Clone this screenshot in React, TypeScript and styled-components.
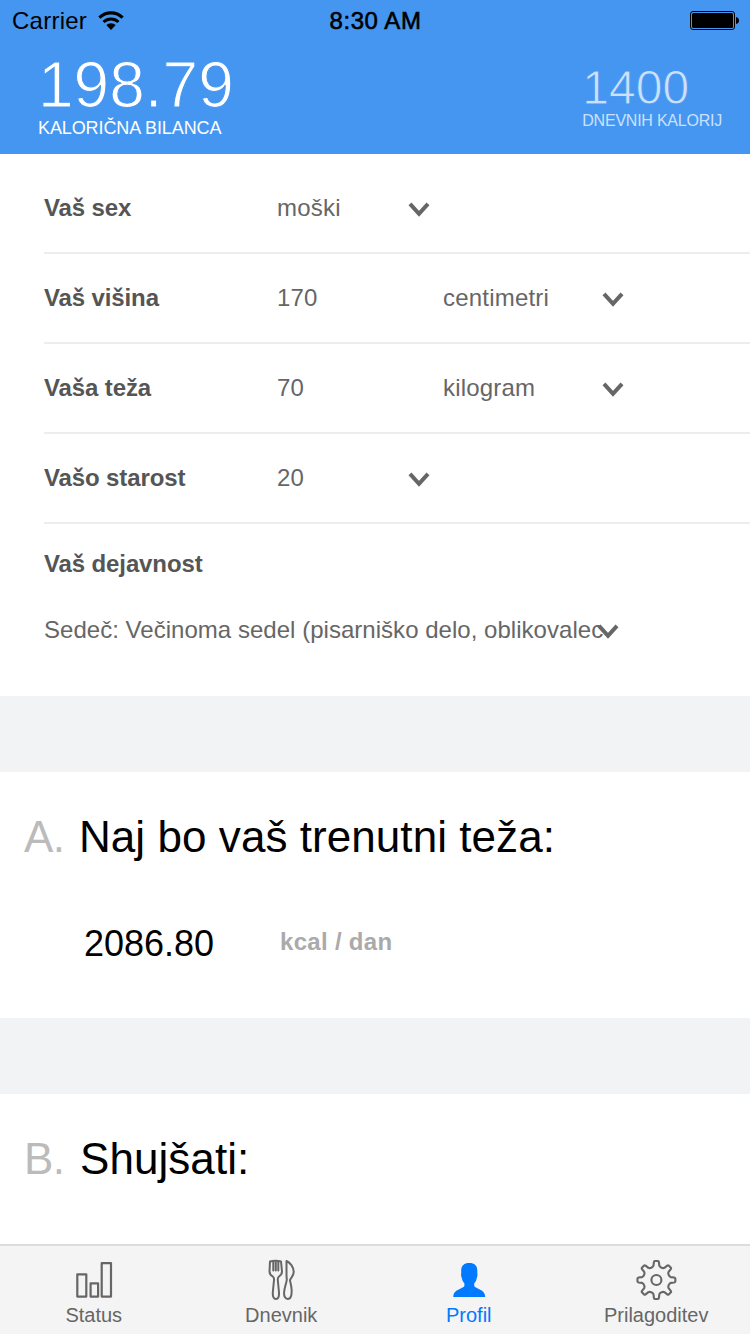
import React from "react";
import styled, { createGlobalStyle } from "styled-components";

const BLUE = "#4596f1";

const GlobalStyle = createGlobalStyle`
  * { box-sizing: border-box; }
  body {
    margin: 0;
    background: #fff;
    font-family: "Liberation Sans", Arial, sans-serif;
    -webkit-font-smoothing: antialiased;
  }
`;

const Screen = styled.div`
  width: 750px;
  height: 1334px;
  display: flex;
  flex-direction: column;
  overflow: hidden;
  background: #fff;
`;

const Header = styled.header`
  height: 154px;
  flex: none;
  background: ${BLUE};
`;

const StatusBar = styled.div`
  height: 41px;
  display: grid;
  grid-template-columns: 1fr auto 1fr;
  align-items: center;
  padding: 1px 11px 0 12px;
  font-size: 24px;
  line-height: 40px;
  color: #000;
`;

const Carrier = styled.div`
  display: flex;
  align-items: center;
  gap: 11px;
  letter-spacing: 0.25px;
`;

const Clock = styled.div`
  letter-spacing: 0.55px;
  -webkit-text-stroke: 0.6px #000;
`;

const Battery = styled.div`
  display: flex;
  justify-content: flex-end;
`;

const Totals = styled.div`
  display: flex;
  justify-content: space-between;
  padding: 12px 28px 0 38px;
`;

const Total = styled.div<{ $dim?: boolean }>`
  padding-top: ${(p) => (p.$dim ? "11px" : "0")};
  color: ${(p) => (p.$dim ? "#cbe1fb" : "#fff")};
`;

const TotalNumber = styled.div<{ $size: number; $thin: number }>`
  height: ${(p) => p.$size}px;
  line-height: ${(p) => p.$size}px;
  font-size: ${(p) => p.$size}px;
  -webkit-text-stroke: ${(p) => p.$thin}px ${BLUE};
`;

const TotalLabel = styled.div<{ $size: number; $height: number; $spacing: number }>`
  height: ${(p) => p.$height}px;
  line-height: ${(p) => p.$height}px;
  font-size: ${(p) => p.$size}px;
  letter-spacing: ${(p) => p.$spacing}px;
  white-space: nowrap;
`;

const Form = styled.section`
  height: 542px;
  flex: none;
  padding: 10px 0 0 44px;
  color: #666;
  font-size: 24px;
`;

const Row = styled.div`
  height: 90px;
  display: flex;
  align-items: center;
  border-bottom: 2px solid #ededed;
`;

const Label = styled.div`
  width: 233px;
  flex: none;
  font-weight: bold;
  letter-spacing: -0.12px;
  color: #555;
`;

const Value = styled.div<{ $width: number }>`
  width: ${(p) => p.$width}px;
  flex: none;
  letter-spacing: 0.2px;
`;

const Activity = styled.div`
  padding-top: 20px;
  line-height: 40px;
`;

const ActivitySelect = styled.div`
  display: flex;
  align-items: center;
  height: 40px;
  margin-top: 26px;
`;

const ActivityText = styled.div`
  width: 560px;
  margin-right: -7px;
  flex: none;
  overflow: hidden;
  white-space: nowrap;
  letter-spacing: 0.03px;
`;

const Chevron = styled.svg`
  width: 22px;
  height: 16px;
  flex: none;
  margin-top: 3px;
`;

const Divider = styled.div`
  height: 76px;
  flex: none;
  background: #f2f3f5;
`;

const Plan = styled.section<{ $height: number }>`
  height: ${(p) => p.$height}px;
  flex: none;
  padding: 40px 0 0 24px;
`;

const PlanTitle = styled.h2`
  display: flex;
  margin: 0;
  font-size: 44px;
  font-weight: normal;
  line-height: 50px;
  letter-spacing: 0.06px;
  white-space: nowrap;
`;

const Letter = styled.span<{ $width: number }>`
  width: ${(p) => p.$width}px;
  letter-spacing: -0.5px;
  color: #bbb;
`;

const PlanValue = styled.div`
  display: flex;
  align-items: center;
  height: 50px;
  margin: 57px 0 0 60px;
  font-size: 36px;
`;

const Amount = styled.span`
  width: 196px;
`;

const Unit = styled.span`
  margin-top: -4px;
  font-size: 24px;
  font-weight: bold;
  letter-spacing: 0.3px;
  color: #aaa;
`;

const TabBar = styled.nav`
  height: 90px;
  flex: none;
  display: grid;
  grid-template-columns: repeat(4, 1fr);
  border-top: 2px solid #dcdcdc;
  background: #f4f4f4;
`;

const Tab = styled.div<{ $active?: boolean }>`
  display: flex;
  flex-direction: column;
  align-items: center;
  padding-top: 12px;
  color: ${(p) => (p.$active ? "#007aff" : "#666")};
  font-size: 20px;
  line-height: 24px;

  svg {
    width: 44px;
    height: 44px;
    margin-bottom: 1px;
  }
`;

const Down = () => (
  <Chevron viewBox="0 0 22 16" fill="none" stroke="#666" strokeWidth="4">
    <path d="M2 1.800 11 11.800 20 1.800" />
  </Chevron>
);

const gearPath = (() => {
  const pts: string[] = [];
  const at = (r: number, deg: number) => {
    const a = (deg * Math.PI) / 180;
    return `${(22.4 + r * Math.sin(a)).toFixed(2)} ${(22 - r * Math.cos(a)).toFixed(2)}`;
  };
  for (let i = 0; i < 8; i++) {
    const c = i * 45;
    pts.push(
      `${i ? "L" : "M"}${at(14.6, c - 11.5)}`,
      `L${at(18, c - 8)}`,
      `Q${at(19, c - 7)} ${at(19, c - 4.5)}`,
      `L${at(19, c + 4.5)}`,
      `Q${at(19, c + 7)} ${at(18, c + 8)}`,
      `L${at(14.6, c + 11.5)}`,
      `Q${at(13.4, c + 15)} ${at(13.3, c + 22.5)}`,
      `Q${at(13.4, c + 30)} ${at(14.6, c + 33.5)}`
    );
  }
  return pts.join("") + "Z";
})();

const rows = [
  { label: "Vaš sex", value: "moški" },
  { label: "Vaš višina", value: "170", unit: "centimetri" },
  { label: "Vaša teža", value: "70", unit: "kilogram" },
  { label: "Vašo starost", value: "20" },
];

export default function App() {
  return (
    <Screen>
      <GlobalStyle />
      <Header>
        <StatusBar>
          <Carrier>
            Carrier
            <svg width="26" height="20" viewBox="0 0 26 20" fill="none" stroke="#000">
              <path d="M1.4 6.700A16.600 16.600 0 0 1 24.600 6.700" strokeWidth="3.200" />
              <path d="M5.500 11A10.800 10.800 0 0 1 20.500 11" strokeWidth="3" />
              <path d="M8.300 14.100A6.700 6.700 0 0 1 17.700 14.100L13 19Z" fill="#000" stroke="none" />
            </svg>
          </Carrier>
          <Clock>8:30 AM</Clock>
          <Battery>
            <svg width="49" height="20" viewBox="0 0 49 20">
              <rect x="0.5" y="0.5" width="44" height="18" rx="2.500" fill="none" stroke="#000" />
              <rect x="2" y="2" width="41" height="15" rx="1.500" fill="#000" />
              <path d="M46 6q3 .5 3 3.500t-3 3.500z" fill="#000" />
            </svg>
          </Battery>
        </StatusBar>
        <Totals>
          <Total>
            <TotalNumber $size={64} $thin={1.1}>198.79</TotalNumber>
            <TotalLabel $size={18} $height={22} $spacing={-0.1}>KALORIČNA BILANCA</TotalLabel>
          </Total>
          <Total $dim>
            <TotalNumber $size={48} $thin={0.9}>1400</TotalNumber>
            <TotalLabel $size={16} $height={18} $spacing={-0.23}>DNEVNIH KALORIJ</TotalLabel>
          </Total>
        </Totals>
      </Header>

      <Form>
        {rows.map((r) => (
          <Row key={r.label}>
            <Label>{r.label}</Label>
            <Value $width={r.unit ? 166 : 131}>{r.value}</Value>
            {r.unit && <Value $width={159}>{r.unit}</Value>}
            <Down />
          </Row>
        ))}
        <Activity>
          <Label>Vaš dejavnost</Label>
          <ActivitySelect>
            <ActivityText>Sedeč: Večinoma sedel (pisarniško delo, oblikovalec</ActivityText>
            <Down />
          </ActivitySelect>
        </Activity>
      </Form>

      <Divider />
      <Plan $height={246}>
        <PlanTitle>
          <Letter $width={55}>A.</Letter>Naj bo vaš trenutni teža:
        </PlanTitle>
        <PlanValue>
          <Amount>2086.80</Amount>
          <Unit>kcal / dan</Unit>
        </PlanValue>
      </Plan>
      <Divider />
      <Plan $height={150}>
        <PlanTitle>
          <Letter $width={56}>B.</Letter>Shujšati:
        </PlanTitle>
      </Plan>

      <TabBar>
        <Tab>
          <svg viewBox="0 0 44 44" fill="none" stroke="#666" strokeWidth="2.200" strokeLinejoin="round">
            <rect x="5.300" y="16.300" width="9" height="22.300" />
            <rect x="18.600" y="25.300" width="7.500" height="13.300" />
            <rect x="29.700" y="5.200" width="9.300" height="33.400" />
          </svg>
          Status
        </Tab>
        <Tab>
          <svg viewBox="0 0 44 44" fill="none" stroke="#666" strokeWidth="2" strokeLinejoin="round" strokeLinecap="round">
            <path d="M11 3.500Q16.500 2 22 3.500L23 13.500Q23 16.500 20 18.500Q18.600 19.500 18.800 22L20 34.500Q20.300 41 17 41Q13.500 41 13.800 34.500L15 22Q15.200 19.500 13.800 18.500Q10.500 16.500 10.500 13.500Z" />
            <path d="M14.300 4V12.500M16.800 4V12.500M19.300 4V12.500" />
            <path d="M27.500 3C31 4.500 34.700 9 34.700 14C34.700 18 32 19.500 31 22C31 24 32.700 27.500 32.700 33C32.700 38 31.500 41 28.800 41C26 41 24.900 38 25.100 34.500C25.400 29 27.600 25 27.800 21.500L27.500 18Z" />
          </svg>
          Dnevnik
        </Tab>
        <Tab $active>
          <svg viewBox="0 0 44 44" fill="#007aff">
            <path d="M22.200 5C27.500 5 30.300 7.500 30.300 12.500V15.500Q30.800 17 30 19.500Q29 24 27.200 25.500V28C28.500 31 38.200 31 38.200 39H6.200C6.200 31 16 31 17.400 28V25.500Q15.500 24 14.600 19.500Q13.700 17 14.200 15.500V12.500C14.200 7.500 17.200 5 22.200 5Z" />
          </svg>
          Profil
        </Tab>
        <Tab>
          <svg viewBox="0 0 44 44" fill="none" stroke="#666" strokeWidth="2.100" strokeLinejoin="round">
            <path d={gearPath} />
            <circle cx="22.400" cy="22" r="5" />
          </svg>
          Prilagoditev
        </Tab>
      </TabBar>
    </Screen>
  );
}
